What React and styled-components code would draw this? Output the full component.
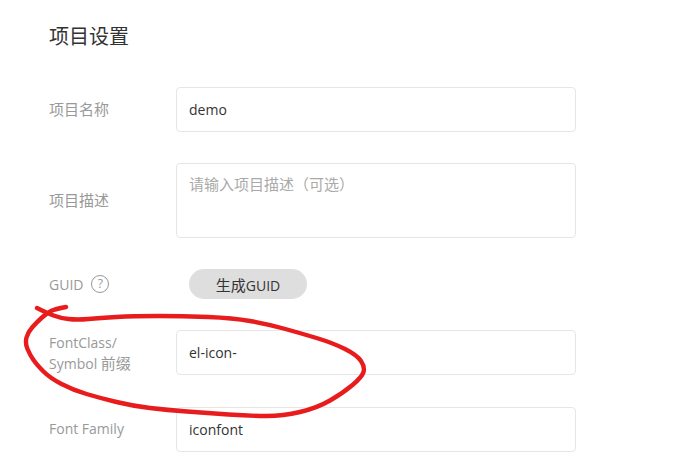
import React from "react";
import styled, { createGlobalStyle } from "styled-components";

const Global = createGlobalStyle`
  html, body {
    margin: 0;
    padding: 0;
    background: #fff;
  }
  body {
    width: 687px;
    height: 473px;
    overflow: hidden;
    font-family: "Open Sans", "Noto Sans CJK SC", sans-serif;
  }
`;

// hand drawn circle, traced off the screenshot
const inkPoints = [
  [66, 307], [55, 309], [47, 313], [37, 322], [28, 332], [25, 343], [30, 355], [37, 365],
  [50, 378], [73, 390], [100, 398], [133, 406], [167, 410], [207, 413], [250, 416],
  [283, 416], [317, 408], [343, 393], [362, 377], [365, 367], [357, 355], [333, 343],
  [300, 333], [267, 324], [233, 318], [183, 316], [133, 316], [100, 318], [77, 320],
  [60, 318], [47, 313], [37, 308],
];

const inkPath = inkPoints.reduce((d, p, i, all) => {
  if (i === 0) return `M${p[0]} ${p[1]}`;
  if (i === all.length - 1) return `${d} L${p[0]} ${p[1]}`;
  const next = all[i + 1];
  return `${d} Q${p[0]} ${p[1]} ${(p[0] + next[0]) / 2} ${(p[1] + next[1]) / 2}`;
}, "");

const App = () => {
  return (
    <Page>
      <Global />
      <Title>项目设置</Title>
      <Form>
        <Row>
          <Label>
            <Cjk>项目名称</Cjk>
          </Label>
          <Input value="demo" readOnly />
        </Row>
        <Row>
          <Label>
            <Cjk>项目描述</Cjk>
          </Label>
          <TextArea placeholder="请输入项目描述（可选）" readOnly />
        </Row>
        <Row>
          <Label>
            GUID
            <Help>?</Help>
          </Label>
          <GuidButton>
            <Cjk>生成</Cjk>GUID
          </GuidButton>
        </Row>
        <Row>
          <Label>
            <span>
              FontClass/
              <br />
              Symbol <Cjk>前缀</Cjk>
            </span>
          </Label>
          <Input value="el-icon-" readOnly />
        </Row>
        <Row $last>
          <Label $lift>Font Family</Label>
          <Input value="iconfont" readOnly />
        </Row>
      </Form>
      <Ink viewBox="0 0 687 473">
        <path d={inkPath} fill="none" stroke="#e81c1c" strokeWidth="4.4" strokeLinecap="round" strokeLinejoin="round" />
      </Ink>
    </Page>
  );
};

export default App;

const Page = styled.div`
  position: relative;
  width: 687px;
  height: 473px;
  box-sizing: border-box;
  padding: 25px 0 0 49px;
  overflow: hidden;
  background: #fff;
`;

const Title = styled.h2`
  margin: 0;
  height: 24px;
  font-size: 20px;
  line-height: 24px;
  font-weight: 400;
  color: #333;
`;

const Form = styled.div`
  display: flex;
  flex-direction: column;
  gap: 31px;
  margin-top: 38px;
`;

const Row = styled.div`
  display: flex;
  align-items: center;
  margin-top: ${(p) => (p.$last ? "1px" : "0")};
`;

const Label = styled.div`
  display: flex;
  align-items: center;
  width: 127px;
  flex-shrink: 0;
  box-sizing: border-box;
  padding-bottom: ${(p) => (p.$lift ? "2px" : "0")};
  font-size: 14px;
  line-height: 21px;
  color: #999;
`;

const Cjk = styled.span`
  font-size: 15px;
`;

const Help = styled.span`
  display: inline-flex;
  align-items: center;
  justify-content: center;
  width: 16px;
  height: 16px;
  margin-left: 8px;
  border: 1px solid #999;
  border-radius: 50%;
  font-size: 12px;
  line-height: 1;
  color: #999;
`;

const Input = styled.input`
  width: 400px;
  height: 45px;
  box-sizing: border-box;
  padding: 0 12px;
  border: 1px solid #e6e6e6;
  border-radius: 4px;
  outline: none;
  background: #fff;
  font-family: inherit;
  font-size: 14px;
  color: #333;
`;

const TextArea = styled.textarea`
  display: block;
  width: 400px;
  height: 75px;
  box-sizing: border-box;
  padding: 10px 12px;
  border: 1px solid #e6e6e6;
  border-radius: 4px;
  outline: none;
  resize: none;
  background: #fff;
  font-family: inherit;
  font-size: 15px;
  line-height: 21px;
  color: #333;

  &::placeholder {
    color: #aaa;
    opacity: 1;
  }
`;

const GuidButton = styled.button`
  width: 118px;
  height: 30px;
  margin-left: 13px;
  padding: 0;
  border: none;
  border-radius: 15px;
  background: #dedede;
  font-family: inherit;
  font-size: 14px;
  color: #333;
`;

const Ink = styled.svg`
  position: absolute;
  left: 0;
  top: 0;
  width: 687px;
  height: 473px;
  pointer-events: none;
`;
